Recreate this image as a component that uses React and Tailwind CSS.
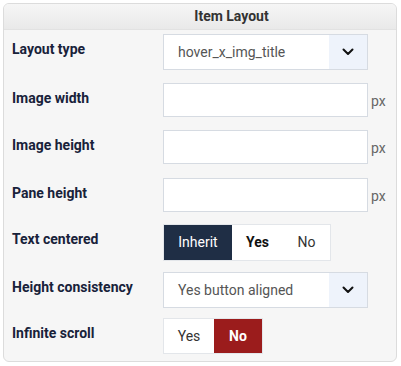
import { useState } from "react";

function Chevron(){
  return (
    <svg width="12" height="8" viewBox="0 0 12 8" fill="none">
      <path d="M1.5 1.5 L6 6 L10.5 1.5" stroke="#111" strokeWidth="2" strokeLinecap="round" strokeLinejoin="round" />
    </svg>
  );
}

function Select({ value, h = "h-[36px]" }){
  return (
    <div className={`flex w-[205px] ${h} border border-[#d6dbe2] bg-white`}>
      <div className="flex-1 flex items-center pl-[14px] text-[14px] text-[#555]">{value}</div>
      <div className="w-[38px] flex items-center justify-center bg-[#eef3fb]">
        <Chevron />
      </div>
    </div>
  );
}

function PxInput(){
  return (
    <div className="flex items-center gap-[3px]">
      <div className="w-[205px] h-[34px] border border-[#d6dbe2] bg-white" />
      <span className="pt-[1px] text-[14px] text-[#666] leading-5">px</span>
    </div>
  );
}

function Row({ label, children, className = "" }){
  return (
    <div className={`flex items-start ${className}`}>
      <div className="w-[151px] pt-[5px] text-[14px] leading-5 font-bold text-[#18223a]">{label}</div>
      {children}
    </div>
  );
}

export default function App(){
  const [centered, setCentered] = useState("inherit");
  const [infinite, setInfinite] = useState("no");

  return (
    <div className="w-[401px] h-[366px] bg-white p-[3px]" style={{ fontFamily: "Roboto, 'Liberation Sans', sans-serif" }}>
      <div className="w-[394px] h-[359px] rounded-[6px] border border-[#dcdcdc] bg-[#f6f6f6] overflow-hidden">
        <div className="h-[26px] flex items-center justify-center pl-[63px] border-b border-[#e2e2e2] bg-gradient-to-b from-[#f6f6f6] to-[#e9e9e9] text-[14px] font-bold text-[#333]">
          Item Layout
        </div>

        <div className="flex flex-col gap-[13px] pl-[8px] pt-[4px]">
          <Row label="Layout type">
            <Select value="hover_x_img_title" />
          </Row>
          <Row label="Image width"><PxInput /></Row>
          <Row label="Image height"><PxInput /></Row>
          <Row label="Pane height" className="mt-[1px]"><PxInput /></Row>
          <Row label="Text centered" className="-mt-[1px]">
            <div className="flex h-[37px] border border-[#e3e6ea] bg-white text-[14px]">
              <button onClick={()=>setCentered("inherit")} className={`w-[68px] ${centered==="inherit" ? "bg-[#1f2e45] text-white" : "text-[#333]"}`}>Inherit</button>
              <button onClick={()=>setCentered("yes")} className={`w-[51px] font-bold ${centered==="yes" ? "bg-[#1f2e45] text-white" : "text-[#111]"}`}>Yes</button>
              <button onClick={()=>setCentered("no")} className={`w-[47px] ${centered==="no" ? "bg-[#1f2e45] text-white" : "text-[#333]"}`}>No</button>
            </div>
          </Row>
          <Row label="Height consistency" className="-mt-[2px]">
            <Select value="Yes button aligned" />
          </Row>
          <Row label="Infinite scroll" className="-mt-[3px]">
            <div className="flex h-[36px] border border-[#e3e6ea] bg-white text-[14px]">
              <button onClick={()=>setInfinite("yes")} className={`w-[50px] ${infinite==="yes" ? "bg-[#9b1c1c] text-white font-bold" : "text-[#333]"}`}>Yes</button>
              <button onClick={()=>setInfinite("no")} className={`w-[48px] ${infinite==="no" ? "bg-[#9b1c1c] text-white font-bold" : "text-[#333]"}`}>No</button>
            </div>
          </Row>
        </div>
      </div>
    </div>
  );
}
